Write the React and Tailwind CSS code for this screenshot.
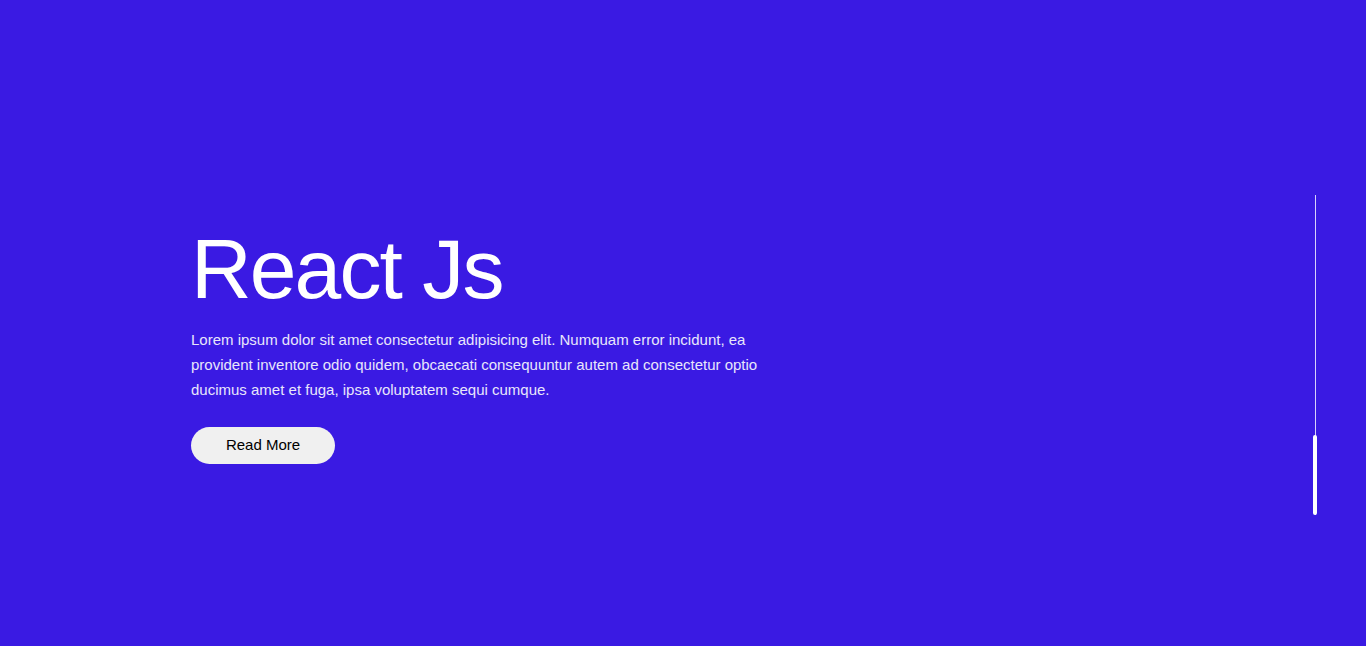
export default function App() {
  return (
    <div
      className="w-full h-[646px] bg-[#3a1ae3] flex justify-between overflow-hidden"
      style={{ fontFamily: '"Liberation Sans", Arial, sans-serif' }}
    >
      <div className="pl-[191px] pt-[220px] w-[780px]">
        <h1 className="text-white text-[84px] leading-[98px] tracking-[-1.9px] font-normal m-0">React Js</h1>
        <p className="mt-[9px] text-[15px] leading-[25px] text-[#e8e6fb] w-[575px]">
          Lorem ipsum dolor sit amet consectetur adipisicing elit. Numquam error incidunt, ea provident inventore odio quidem, obcaecati consequuntur autem ad consectetur optio ducimus amet et fuga, ipsa voluptatem sequi cumque.
        </p>
        <button className="mt-[25px] w-[144px] h-[37px] rounded-full bg-[#f0f0f0] text-[15px] text-black">
          Read More
        </button>
      </div>
      <div className="pr-[49px] pt-[195px]">
        <div className="relative w-[4px] h-[320px] flex justify-center">
          <div className="w-px h-full bg-[#d8d2fb]" />
          <div className="absolute left-0 bottom-0 w-[4px] h-[80px] rounded-full bg-white" />
        </div>
      </div>
    </div>
  );
}
